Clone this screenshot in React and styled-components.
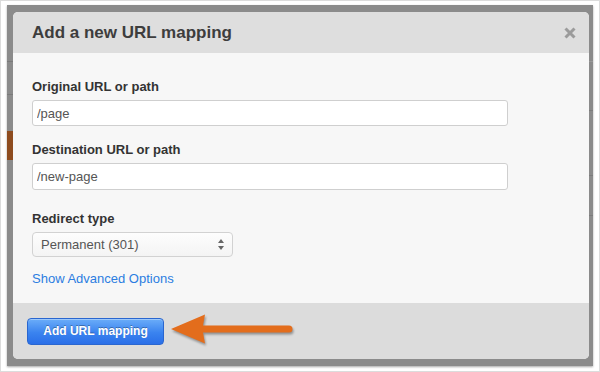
import React from 'react';
import styled, { createGlobalStyle } from 'styled-components';

const GlobalStyle = createGlobalStyle`
  html, body { margin: 0; padding: 0; background: #fff; }
  body { font-family: "Liberation Sans", Arial, Helvetica, sans-serif; }
  * { box-sizing: border-box; }
`;

const Page = styled.div`
  width: 600px;
  height: 372px;
  border: 1px solid #dcdcdc;
  padding: 4px 6px 5px 6px;
  display: flex;
`;

const Backdrop = styled.div`
  flex: 1;
  display: flex;
  background: #8b8b8b;
  box-shadow: 0 1px 2px rgba(0, 0, 0, 0.35);
`;

const Strip = styled.div`
  width: ${(p) => p.w}px;
  flex-shrink: 0;
  background: ${(p) => p.bg};
`;

const Modal = styled.div`
  flex: 1;
  margin: 7px 0;
  display: flex;
  flex-direction: column;
  border-radius: 5px;
  overflow: hidden;
  background: #f7f7f7;
`;

const Header = styled.div`
  height: 41px;
  flex-shrink: 0;
  display: flex;
  align-items: center;
  justify-content: space-between;
  padding: 0 13px 0 19px;
  background: #dedede;
`;

const Title = styled.h3`
  margin: 0;
  font-size: 17px;
  line-height: 41px;
  font-weight: bold;
  color: #3d3d3d;
`;

const Close = styled.button`
  border: 0;
  padding: 0;
  background: none;
  width: 12px;
  height: 12px;
  display: flex;
  cursor: pointer;
`;

const Body = styled.div`
  flex: 1;
  padding: 25px 19px 0 19px;
  display: flex;
  flex-direction: column;
`;

const Field = styled.div`
  display: flex;
  flex-direction: column;
  margin-bottom: ${(p) => p.mb}px;
`;

const Label = styled.label`
  font-size: 13px;
  line-height: 18px;
  font-weight: bold;
  color: #333;
  margin-bottom: 4px;
`;

const TextInput = styled.input`
  width: 476px;
  height: ${(p) => p.h || 27}px;
  border: 1px solid #cfcfcf;
  border-radius: 3px;
  background: #fff;
  padding: 0 4px;
  font-family: inherit;
  font-size: 13px;
  color: #555;
  outline: none;
`;

const SelectBox = styled.div`
  width: 201px;
  height: 25px;
  border: 1px solid #d2d2d2;
  border-radius: 4px;
  background: linear-gradient(#fdfdfd, #f4f4f4);
  display: flex;
  align-items: center;
  justify-content: space-between;
  padding: 0 8px 0 8px;
  font-size: 13px;
  color: #555;
`;

const Link = styled.a`
  font-size: 13px;
  line-height: 18px;
  color: #2b7de1;
  text-decoration: none;
  cursor: pointer;
`;

const Footer = styled.div`
  height: 56px;
  flex-shrink: 0;
  display: flex;
  align-items: center;
  padding: 0 0 0 14px;
  background: #dcdcdc;
`;

const PrimaryButton = styled.button`
  width: 137px;
  height: 27px;
  border: 1px solid #2a66cf;
  border-radius: 4px;
  background: linear-gradient(#6badf9, #3a83ef 55%, #2a6fe8);
  color: #fff;
  font-family: inherit;
  font-size: 12px;
  font-weight: bold;
  text-shadow: 0 -1px 0 rgba(0, 0, 0, 0.3);
  box-shadow: inset 0 1px 0 rgba(255, 255, 255, 0.35);
  cursor: pointer;
`;

const Arrow = styled.svg`
  margin-left: 7px;
  margin-top: -4px;
  filter: drop-shadow(1px 2px 1px rgba(0, 0, 0, 0.35));
  overflow: visible;
`;

const leftBg = `linear-gradient(to bottom,
  #8b8b8b 0, #8b8b8b 56px, #7a7a7a 56px, #7a7a7a 57px,
  #8b8b8b 57px, #8b8b8b 89px, #7a7a7a 89px, #7a7a7a 90px,
  #8b8b8b 90px, #8b8b8b 126px, #8e4c1f 126px, #8e4c1f 155px,
  #8b8b8b 155px)`;

const rightBg = `linear-gradient(to bottom,
  #8b8b8b 0, #8b8b8b 56px, #9a9a9a 56px, #9a9a9a 57px,
  #8b8b8b 57px, #8b8b8b 105px, #7c7c7c 105px, #7c7c7c 106px,
  #8b8b8b 106px, #8b8b8b 170px, #7c7c7c 170px, #7c7c7c 171px,
  #8b8b8b 171px, #8b8b8b 210px, #7c7c7c 210px, #7c7c7c 211px,
  #8b8b8b 211px)`;

export default function App() {
  return (
    <>
      <GlobalStyle />
      <Page>
        <Backdrop>
          <Strip w={6} bg={leftBg} />
          <Modal>
            <Header>
              <Title>Add a new URL mapping</Title>
              <Close aria-label="close">
                <svg width="12" height="12" viewBox="0 0 12 12">
                  <path d="M1.5 1.5 L10.5 10.5 M10.5 1.5 L1.5 10.5" stroke="#9b9b9b" strokeWidth="3" />
                </svg>
              </Close>
            </Header>
            <Body>
              <Field mb={15}>
                <Label>Original URL or path</Label>
                <TextInput h={26} defaultValue="/page" />
              </Field>
              <Field mb={20}>
                <Label>Destination URL or path</Label>
                <TextInput defaultValue="/new-page" />
              </Field>
              <Field mb={13}>
                <Label>Redirect type</Label>
                <SelectBox>
                  <span>Permanent (301)</span>
                  <svg width="6" height="11" viewBox="0 0 6 11">
                    <path d="M3 0 L6 4 L0 4 Z M0 7 L6 7 L3 11 Z" fill="#666" />
                  </svg>
                </SelectBox>
              </Field>
              <Link>Show Advanced Options</Link>
            </Body>
            <Footer>
              <PrimaryButton>Add URL mapping</PrimaryButton>
              <Arrow width="124" height="30" viewBox="0 0 124 30">
                <path d="M0 15 L34 0.5 L32 11.5 L118 11.5 A3.5 3.5 0 0 1 118 18.5 L32 18.5 L34 29.5 Z" fill="#e36d1c" />
              </Arrow>
            </Footer>
          </Modal>
          <Strip w={4} bg={rightBg} />
        </Backdrop>
      </Page>
    </>
  );
}
